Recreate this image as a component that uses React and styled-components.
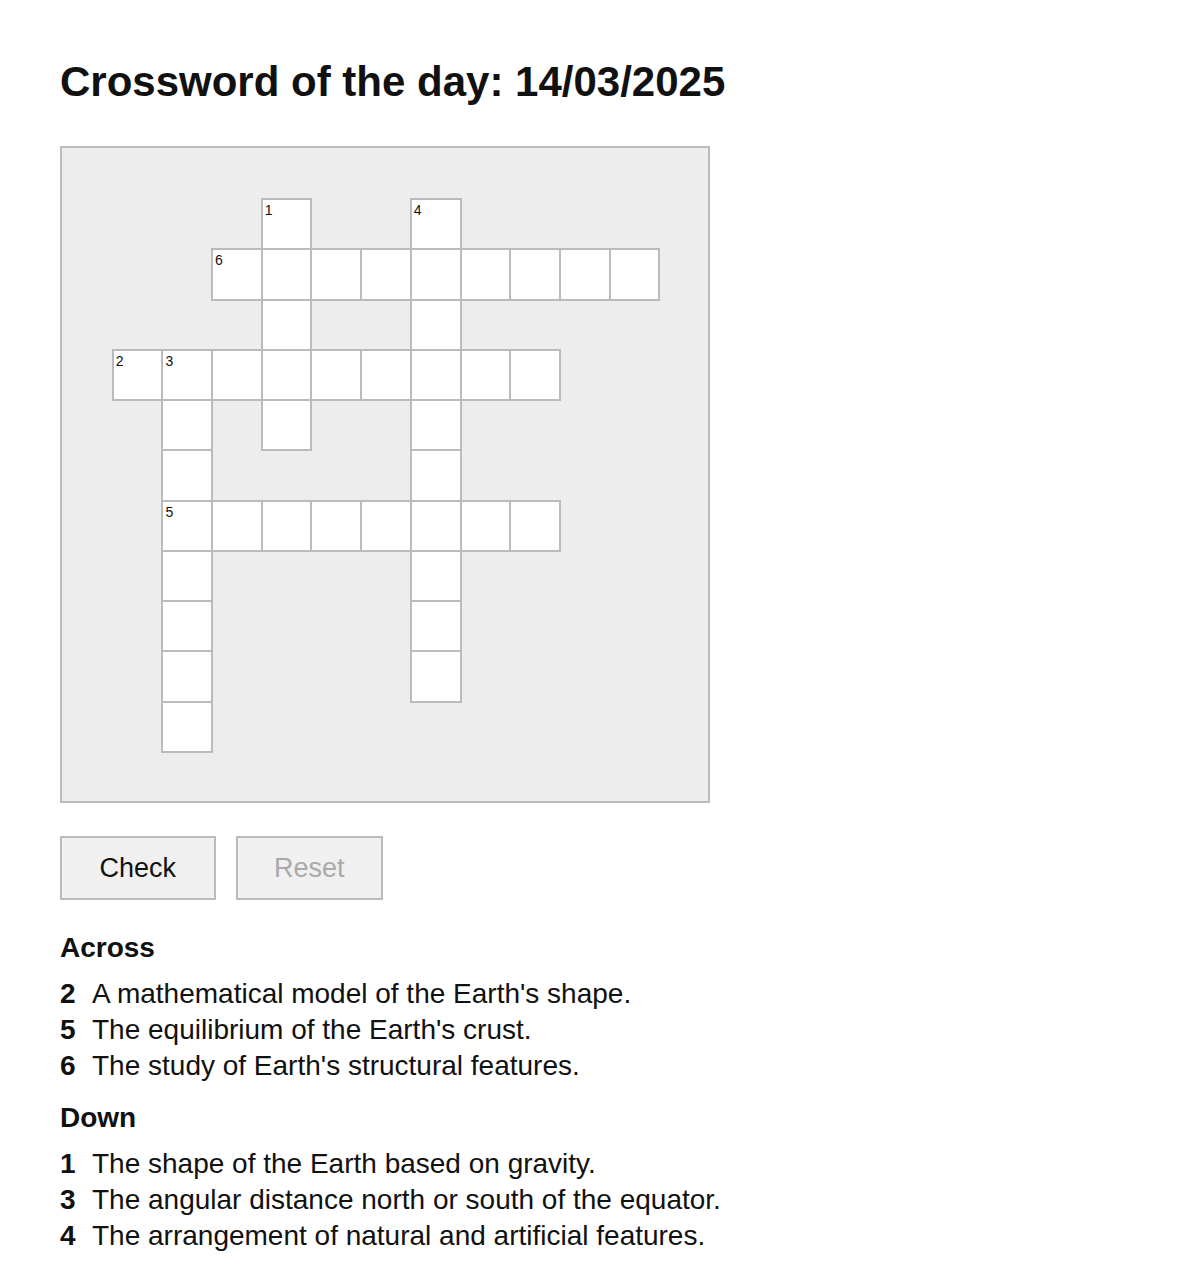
import styled, { createGlobalStyle } from 'styled-components'

const GlobalStyle = createGlobalStyle`
  body {
    margin: 0;
    background: #fff;
    color: #111;
    font-family: "Liberation Sans", Arial, sans-serif;
  }
`

const Page = styled.main`
  padding: 58px 60px 40px;
`

const Title = styled.h1`
  margin: 0 0 40px;
  font-size: 42px;
  line-height: 48px;
  font-weight: 700;
`

const Board = styled.div`
  box-sizing: border-box;
  width: 650px;
  height: 657px;
  border: 2px solid #bbb;
  background: #ededed;
  display: grid;
  grid-template-columns: repeat(13, 1fr);
  grid-template-rows: repeat(13, 1fr);
`

const Cell = styled.div`
  position: relative;
  box-sizing: border-box;
  width: calc(100% + 2px);
  height: calc(100% + 2px);
  border: 2px solid #bbb;
  background: #fff;
`

const Num = styled.span`
  position: absolute;
  top: 2px;
  left: 2px;
  font-size: 14px;
  line-height: 16px;
  color: #111;
  pointer-events: none;
`

const Letter = styled.input`
  box-sizing: border-box;
  width: 100%;
  height: 100%;
  border: 0;
  padding: 0;
  background: transparent;
  text-align: center;
  text-transform: uppercase;
  font: 700 22px "Liberation Sans", Arial, sans-serif;
  color: #111;
  outline: none;
`

const Actions = styled.div`
  display: flex;
  gap: 20px;
  margin-top: 33px;
`

const Button = styled.button`
  box-sizing: border-box;
  height: 64px;
  padding: 0 ${p => p.$pad}px;
  border: 2px solid #bbb;
  background: #f0f0f0;
  font-family: "Liberation Sans", Arial, sans-serif;
  font-size: 27px;
  line-height: 30px;
  color: ${p => (p.disabled ? '#aaa' : '#111')};
  cursor: ${p => (p.disabled ? 'default' : 'pointer')};
`

const Clues = styled.section`
  margin-top: 34px;
  display: flex;
  flex-direction: column;
  gap: 20px;
`

const Heading = styled.h2`
  margin: 0 0 14px;
  font-size: 28px;
  line-height: 28px;
  font-weight: 700;
`

const ClueList = styled.ol`
  list-style: none;
  margin: 0;
  padding: 0;
`

const Clue = styled.li`
  display: flex;
  font-size: 28px;
  line-height: 36px;
`

const ClueNum = styled.b`
  width: 32px;
  flex: none;
`

const words = [
  { n: 2, dir: 'across', row: 3, col: 0, len: 9, clue: "A mathematical model of the Earth's shape." },
  { n: 5, dir: 'across', row: 6, col: 1, len: 8, clue: "The equilibrium of the Earth's crust." },
  { n: 6, dir: 'across', row: 1, col: 2, len: 9, clue: "The study of Earth's structural features." },
  { n: 1, dir: 'down', row: 0, col: 3, len: 5, clue: 'The shape of the Earth based on gravity.' },
  { n: 3, dir: 'down', row: 3, col: 1, len: 8, clue: 'The angular distance north or south of the equator.' },
  { n: 4, dir: 'down', row: 0, col: 6, len: 10, clue: 'The arrangement of natural and artificial features.' },
]

const buildCells = () => {
  const map = new Map()
  words.forEach(w => {
    for (let i = 0; i < w.len; i++) {
      const r = w.dir === 'down' ? w.row + i : w.row
      const c = w.dir === 'across' ? w.col + i : w.col
      const key = `${r}-${c}`
      const cell = map.get(key) || { r, c, num: null }
      if (i === 0) cell.num = w.n
      map.set(key, cell)
    }
  })
  return [...map.values()].sort((a, b) => a.r - b.r || a.c - b.c)
}

const cells = buildCells()

const ClueGroup = ({ title, dir }) => (
  <div>
    <Heading>{title}</Heading>
    <ClueList>
      {words
        .filter(w => w.dir === dir)
        .sort((a, b) => a.n - b.n)
        .map(w => (
          <Clue key={w.n}>
            <ClueNum>{w.n}</ClueNum>
            <span>{w.clue}</span>
          </Clue>
        ))}
    </ClueList>
  </div>
)

const App = () => {
  return (
    <Page>
      <GlobalStyle />
      <Title>Crossword of the day: 14/03/2025</Title>
      <Board>
        {cells.map(cell => (
          <Cell
            key={`${cell.r}-${cell.c}`}
            style={{ gridRow: cell.r + 2, gridColumn: cell.c + 2 }}
          >
            {cell.num && <Num>{cell.num}</Num>}
            <Letter maxLength={1} aria-label={`cell ${cell.r + 1}, ${cell.c + 1}`} />
          </Cell>
        ))}
      </Board>
      <Actions>
        <Button $pad={37.5}>Check</Button>
        <Button $pad={36.5} disabled>Reset</Button>
      </Actions>
      <Clues>
        <ClueGroup title="Across" dir="across" />
        <ClueGroup title="Down" dir="down" />
      </Clues>
    </Page>
  )
}

export default App
